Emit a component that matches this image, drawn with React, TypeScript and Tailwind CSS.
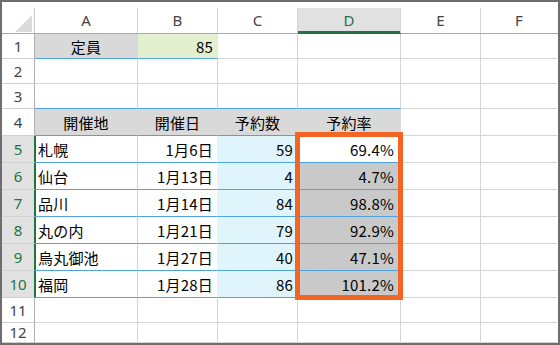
import type { ReactNode } from 'react'
import clsx from 'clsx'

const GRID = 'grid grid-cols-[33px_103px_80px_80px_103px_80px_1fr]'
const COLUMNS = ['A', 'B', 'C', 'D', 'E', 'F']

type Booking = {
  row: number
  place: string
  date: string
  count: string
  rate: string
}

const bookings: Booking[] = [
  { row: 5, place: '札幌', date: '1月6日', count: '59', rate: '69.4%' },
  { row: 6, place: '仙台', date: '1月13日', count: '4', rate: '4.7%' },
  { row: 7, place: '品川', date: '1月14日', count: '84', rate: '98.8%' },
  { row: 8, place: '丸の内', date: '1月21日', count: '79', rate: '92.9%' },
  { row: 9, place: '烏丸御池', date: '1月27日', count: '40', rate: '47.1%' },
  { row: 10, place: '福岡', date: '1月28日', count: '86', rate: '101.2%' }
]

type CellProps = {
  children?: ReactNode
  align?: 'left' | 'center' | 'right'
  fill?: string
  bottom?: string
  right?: string
  className?: string
}

function Cell({
  children,
  align = 'left',
  fill = 'bg-white',
  bottom = 'border-b-[#d4d4d4]',
  right = 'border-r-[#d4d4d4]',
  className
}: CellProps) {
  return (
    <div
      className={clsx(
        'flex items-center overflow-hidden whitespace-nowrap border-r border-b px-[4px] text-[15px] leading-none tracking-[0.2px] text-black',
        align === 'center' && 'justify-center',
        align === 'right' && 'justify-end',
        align === 'left' && 'pl-[3px]',
        fill,
        bottom,
        right,
        className
      )}
    >
      {children}
    </div>
  )
}

function RowHead({ n, active = false }: { n: number; active?: boolean }) {
  return (
    <div
      className={clsx(
        "flex items-center justify-center border-r border-b border-b-[#d0d0d0] font-['Noto_Sans',sans-serif] text-[15px] leading-none",
        active ? 'border-r-[#217346] bg-[#e1e1e1] text-[#217346]' : 'border-r-[#b0b0b0] bg-white text-[#444]'
      )}
    >
      {n}
    </div>
  )
}

function BlankTail({ count }: { count: number }) {
  return (
    <>
      {Array.from({ length: count }, (_, i) => (
        <Cell
          key={i}
          right={i === count - 1 ? 'border-r-transparent' : 'border-r-[#d4d4d4]'}
        />
      ))}
    </>
  )
}

const BLUE = 'border-b-[#4ea3e0]'

export default function App() {
  return (
    <div className="relative flex h-[345px] w-[560px] flex-col overflow-hidden border-2 border-[#6e6e6e] bg-white font-['Noto_Sans_CJK_JP',sans-serif]">
      {/* column letters */}
      <div className={clsx(GRID, 'h-[32px] shrink-0')}>
        <div className="flex flex-col justify-end border-b border-b-[#aaaaaa]">
          <div className="flex h-[25px] items-end justify-end border-r border-r-[#c8c8c8] pr-[2px] pb-[1px]">
            <svg width="17" height="17" viewBox="0 0 17 17" aria-hidden="true">
              <polygon points="17,0 17,17 0,17" fill="#dadada" />
            </svg>
          </div>
        </div>
        {COLUMNS.map((col, i) => {
          const active = col === 'D'
          return (
            <div
              key={col}
              className={clsx(
                'flex flex-col justify-end border-b',
                active ? 'border-b-[#217346]' : 'border-b-[#aaaaaa]'
              )}
            >
              <div
                className={clsx(
                  "flex h-[25px] items-center justify-center border-r font-['Noto_Sans',sans-serif] text-[15px] leading-none",
                  i === COLUMNS.length - 1 ? 'border-r-transparent' : 'border-r-[#d4d4d4]',
                  active
                    ? 'bg-[#e1e1e1] text-[#217346] shadow-[inset_0_-2px_0_#217346]'
                    : 'text-[#444]'
                )}
              >
                {col}
              </div>
            </div>
          )
        })}
      </div>

      {/* 1: capacity */}
      <div className={clsx(GRID, 'h-[25px] shrink-0')}>
        <RowHead n={1} />
        <Cell align="center" fill="bg-[#d9d9d9]" bottom={BLUE} right="border-r-transparent">
          定員
        </Cell>
        <Cell align="right" fill="bg-[#e2f0d0]" bottom={BLUE} right="border-r-[#e2f0d0]">
          85
        </Cell>
        <BlankTail count={4} />
      </div>

      <div className={clsx(GRID, 'h-[25px] shrink-0')}>
        <RowHead n={2} />
        <BlankTail count={6} />
      </div>

      <div className={clsx(GRID, 'h-[25px] shrink-0')}>
        <RowHead n={3} />
        <Cell bottom={BLUE} />
        <Cell bottom={BLUE} />
        <Cell bottom={BLUE} />
        <Cell bottom={BLUE} />
        <BlankTail count={2} />
      </div>

      {/* 4: table header */}
      <div className={clsx(GRID, 'h-[27px] shrink-0')}>
        <RowHead n={4} />
        {['開催地', '開催日', '予約数', '予約率'].map((label) => (
          <Cell key={label} align="center" fill="bg-[#d9d9d9]" bottom={BLUE} right="border-r-transparent">
            {label}
          </Cell>
        ))}
        <BlankTail count={2} />
      </div>

      {bookings.map((b) => (
        <div key={b.row} className={clsx(GRID, 'h-[27px] shrink-0')}>
          <RowHead n={b.row} active />
          <Cell bottom={BLUE} className="shadow-[inset_1px_0_0_#217346]">
            {b.place}
          </Cell>
          <Cell align="right" bottom={BLUE} right="border-r-[#dff4fb]">
            {b.date}
          </Cell>
          <Cell align="right" fill="bg-[#dff4fb]" bottom={BLUE} right="border-r-transparent">
            {b.count}
          </Cell>
          <Cell
            align="right"
            fill={b.row === 5 ? 'bg-white' : 'bg-[#c9c9c9]'}
            bottom={BLUE}
            right="border-r-transparent"
            className="pr-[6px]"
          >
            {b.rate}
          </Cell>
          <BlankTail count={2} />
        </div>
      ))}

      <div className={clsx(GRID, 'h-[25px] shrink-0')}>
        <RowHead n={11} />
        <BlankTail count={6} />
      </div>

      <div className={clsx(GRID, 'min-h-0 flex-1')}>
        <RowHead n={12} />
        <BlankTail count={6} />
      </div>

      {/* highlight around the rate column */}
      <div className="pointer-events-none absolute left-[293px] top-[130px] h-[168px] w-[108px] border-[5px] border-[#f26522]" />
    </div>
  )
}
